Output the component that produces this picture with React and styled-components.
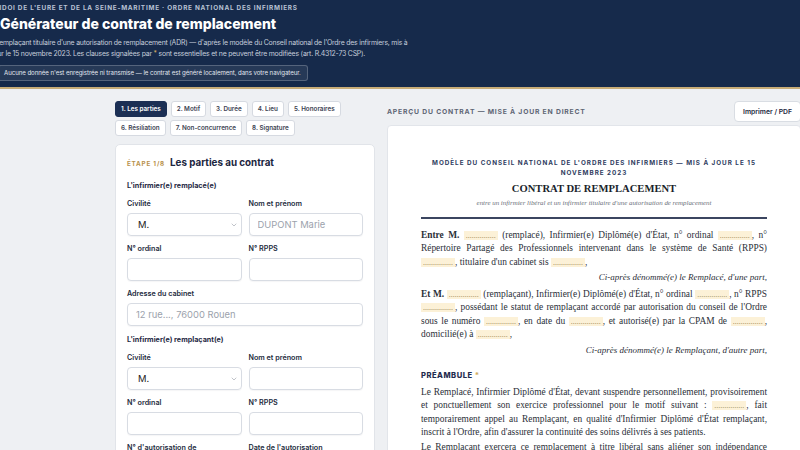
import React from "react";
import styled, { createGlobalStyle } from "styled-components";
import { ChevronDown } from "lucide-react";

const GlobalStyles = createGlobalStyle`
  html, body {
    margin: 0;
    padding: 0;
    background: #eef0f3;
    overflow: hidden;
    font-family: Inter, "Noto Sans", sans-serif;
  }
  * { box-sizing: border-box; }
`;

const Header = styled.header`
  height: 89px;
  padding-top: 3px;
  background: #162a4b;
  border-bottom: 2px solid #c8ad78;
  overflow: hidden;
  color: #fff;
`;

const Eyebrow = styled.div`
  margin-left: ${(p) => p.$shift || 0}px;
  font-size: 6.4px;
  line-height: 10px;
  font-weight: 700;
  letter-spacing: 0.75px;
  color: #b8c2d4;
  white-space: nowrap;
`;

const Title = styled.h1`
  margin: 2px 0 0;
  font-size: 14px;
  line-height: 18px;
  font-weight: 800;
  color: #fff;
  white-space: nowrap;
`;

const Lead = styled.p`
  margin: 5px 0 0 ${(p) => p.$shift || 0}px;
  font-size: 6.9px;
  line-height: 10.5px;
  letter-spacing: -0.2px;
  color: #c6cedb;
  white-space: nowrap;
`;

const Mark = styled.span`
  color: #d2ae64;
`;

const Notice = styled.div`
  display: inline-flex;
  align-items: center;
  height: 16px;
  margin: 4px 0 0 -2px;
  padding: 0 6px 0 5px;
  border: 1px solid rgba(255, 255, 255, 0.22);
  border-radius: 3px;
  background: rgba(255, 255, 255, 0.07);
  font-size: 6.1px;
  letter-spacing: -0.05px;
  color: #e3e8f0;
  white-space: nowrap;
`;

const Main = styled.main`
  display: flex;
  align-items: flex-start;
  gap: 12px;
  padding: 12px 0 0 115px;
`;

const FormColumn = styled.section`
  width: 260px;
  flex-shrink: 0;
`;

const Tabs = styled.nav`
  display: flex;
  flex-wrap: wrap;
  gap: 3px 4px;
  width: 236px;
`;

const Tab = styled.button`
  height: 16px;
  padding: 0 5px;
  border: 1px solid ${(p) => (p.$active ? "#1b2f54" : "#d6dae1")};
  border-radius: 3px;
  background: ${(p) => (p.$active ? "#1b2f54" : "#fff")};
  color: ${(p) => (p.$active ? "#fff" : "#3c4252")};
  font-family: Inter, sans-serif;
  font-size: 6.3px;
  font-weight: 600;
  white-space: nowrap;
`;

const Card = styled.div`
  margin-top: 8px;
  padding: 11px 11px 20px;
  background: #fff;
  border: 1px solid #e1e4e9;
  border-radius: 5px;
`;

const StepRow = styled.div`
  display: flex;
  align-items: baseline;
  gap: 5px;
  line-height: 13px;
`;

const StepTag = styled.span`
  font-size: 6.3px;
  font-weight: 700;
  letter-spacing: 0.8px;
  color: #b8914c;
`;

const StepTitle = styled.span`
  font-size: 9.8px;
  font-weight: 700;
  color: #1b2540;
`;

const Group = styled.div`
  margin-top: ${(p) => p.$top}px;
`;

const GroupTitle = styled.div`
  font-size: 7.2px;
  line-height: 10px;
  font-weight: 700;
  color: #1f2a44;
  margin-bottom: 8px;
`;

const Grid = styled.div`
  display: grid;
  grid-template-columns: 1fr 1fr;
  gap: 8px 7px;
`;

const Field = styled.label`
  display: block;
  grid-column: ${(p) => (p.$wide ? "1 / -1" : "auto")};
`;

const FieldLabel = styled.div`
  font-size: 7.2px;
  line-height: 10px;
  font-weight: 600;
  color: #232b3d;
  margin-bottom: 4px;
  white-space: nowrap;
`;

const Input = styled.input`
  display: block;
  width: 100%;
  height: 23px;
  padding: 0 8px;
  border: 1px solid #d8dce3;
  border-radius: 4px;
  box-shadow: 0 1px 1px rgba(20, 30, 50, 0.04);
  font-family: Inter, sans-serif;
  font-size: 9.4px;
  color: #222;
  &::placeholder { color: #9ca2ac; }
`;

const SelectBox = styled.div`
  position: relative;
  display: flex;
  align-items: center;
  height: 23px;
  padding: 0 10px;
  border: 1px solid #d8dce3;
  border-radius: 4px;
  box-shadow: 0 1px 1px rgba(20, 30, 50, 0.04);
  font-size: 9.4px;
  color: #222;
  svg {
    position: absolute;
    right: 3px;
    top: 7px;
    color: #8a909a;
  }
`;

const PreviewColumn = styled.section`
  width: 414px;
  flex-shrink: 0;
`;

const PreviewBar = styled.div`
  display: flex;
  align-items: center;
  justify-content: space-between;
  height: 21px;
`;

const PreviewLabel = styled.span`
  font-size: 6.8px;
  font-weight: 700;
  letter-spacing: 0.8px;
  color: #5f6675;
`;

const PrintButton = styled.button`
  height: 21px;
  padding: 0 8px;
  border: 1px solid #d9dde3;
  border-radius: 4px;
  background: #fff;
  font-family: Inter, sans-serif;
  font-size: 6.8px;
  font-weight: 600;
  color: #1d2740;
`;

const Sheet = styled.article`
  margin-top: 3px;
  padding: 32px 33px 30px;
  background: #fff;
  border: 1px solid #e2e5ea;
  border-radius: 4px;
  font-family: "Liberation Serif", "Times New Roman", serif;
  color: #2b2f38;
`;

const SheetEyebrow = styled.div`
  text-align: center;
  font-family: Inter, sans-serif;
  font-size: 6.3px;
  line-height: 10px;
  font-weight: 700;
  letter-spacing: 1px;
  color: #2e3b5e;
  padding: 0 8px;
`;

const SheetTitle = styled.h2`
  margin: 4px 0 0;
  text-align: center;
  font-size: 10.6px;
  line-height: 14px;
  font-weight: 700;
  color: #1a1f2b;
`;

const SheetSubtitle = styled.div`
  margin-top: 2px;
  text-align: center;
  font-size: 6.9px;
  line-height: 9px;
  font-style: italic;
  color: #6b707a;
`;

const Rule = styled.hr`
  margin: 10px 0 0;
  border: 0;
  border-top: 2px solid #3b4560;
`;

const Para = styled.p`
  margin: ${(p) => p.$top}px 0 0;
  font-size: 9.4px;
  line-height: 13.4px;
  text-align: justify;
`;

const Signoff = styled.p`
  margin: ${(p) => p.$top}px 0 0;
  font-size: 9px;
  line-height: 13.4px;
  font-style: italic;
  text-align: right;
`;

const SectionHead = styled.h3`
  margin: 13px 0 0;
  font-family: Inter, sans-serif;
  font-size: 7.6px;
  line-height: 12px;
  font-weight: 800;
  letter-spacing: 0.5px;
  color: #1f2c4e;
`;

const Blank = styled.span`
  padding: 0 2px;
  background: #fcf1d7;
  font-size: 8px;
  color: #8f7746;
`;

const Dots = () => <Blank>...............</Blank>;

const tabs = [
  "1. Les parties",
  "2. Motif",
  "3. Durée",
  "4. Lieu",
  "5. Honoraires",
  "6. Résiliation",
  "7. Non-concurrence",
  "8. Signature",
];

const Select = ({ value }) => (
  <SelectBox>
    {value}
    <ChevronDown size={8} strokeWidth={1.6} />
  </SelectBox>
);

const App = () => {
  return (
    <>
      <GlobalStyles />
      <Header>
        <Eyebrow $shift={-6}>
          CIDOI DE L'EURE ET DE LA SEINE-MARITIME · ORDRE NATIONAL DES INFIRMIERS
        </Eyebrow>
        <Title>Générateur de contrat de remplacement</Title>
        <Lead $shift={-5}>
          Remplaçant titulaire d'une autorisation de remplacement (ADR) — d'après le modèle du Conseil national de l'Ordre des infirmiers, mis à
          <br />
          <span style={{ marginLeft: -3 }}>jour le 15 novembre 2023. Les clauses signalées par <Mark>*</Mark> sont essentielles et ne peuvent être modifiées (art. R.4312-73 CSP).</span>
        </Lead>
        <Notice>
          Aucune donnée n'est enregistrée ni transmise — le contrat est généré localement, dans votre navigateur.
        </Notice>
      </Header>

      <Main>
        <FormColumn>
          <Tabs>
            {tabs.map((t, i) => (
              <Tab key={t} $active={i === 0}>
                {t}
              </Tab>
            ))}
          </Tabs>

          <Card>
            <StepRow>
              <StepTag>ÉTAPE 1/8</StepTag>
              <StepTitle>Les parties au contrat</StepTitle>
            </StepRow>

            <Group $top={10}>
              <GroupTitle>L'infirmier(e) remplacé(e)</GroupTitle>
              <Grid>
                <Field>
                  <FieldLabel>Civilité</FieldLabel>
                  <Select value="M." />
                </Field>
                <Field>
                  <FieldLabel>Nom et prénom</FieldLabel>
                  <Input placeholder="DUPONT Marie" />
                </Field>
                <Field>
                  <FieldLabel>N° ordinal</FieldLabel>
                  <Input />
                </Field>
                <Field>
                  <FieldLabel>N° RPPS</FieldLabel>
                  <Input />
                </Field>
                <Field $wide>
                  <FieldLabel>Adresse du cabinet</FieldLabel>
                  <Input placeholder="12 rue..., 76000 Rouen" />
                </Field>
              </Grid>
            </Group>

            <Group $top={9}>
              <GroupTitle>L'infirmier(e) remplaçant(e)</GroupTitle>
              <Grid>
                <Field>
                  <FieldLabel>Civilité</FieldLabel>
                  <Select value="M." />
                </Field>
                <Field>
                  <FieldLabel>Nom et prénom</FieldLabel>
                  <Input />
                </Field>
                <Field>
                  <FieldLabel>N° ordinal</FieldLabel>
                  <Input />
                </Field>
                <Field>
                  <FieldLabel>N° RPPS</FieldLabel>
                  <Input />
                </Field>
                <Field>
                  <FieldLabel>N° d'autorisation de</FieldLabel>
                  <Input />
                </Field>
                <Field>
                  <FieldLabel>Date de l'autorisation</FieldLabel>
                  <Input />
                </Field>
              </Grid>
            </Group>
          </Card>
        </FormColumn>

        <PreviewColumn>
          <PreviewBar>
            <PreviewLabel>APERÇU DU CONTRAT — MISE À JOUR EN DIRECT</PreviewLabel>
            <PrintButton>Imprimer / PDF</PrintButton>
          </PreviewBar>

          <Sheet>
            <SheetEyebrow>
              MODÈLE DU CONSEIL NATIONAL DE L'ORDRE DES INFIRMIERS — MIS À JOUR LE 15 NOVEMBRE 2023
            </SheetEyebrow>
            <SheetTitle>CONTRAT DE REMPLACEMENT</SheetTitle>
            <SheetSubtitle>
              entre un infirmier libéral et un infirmier titulaire d'une autorisation de remplacement
            </SheetSubtitle>
            <Rule />

            <Para $top={10}>
              <b>Entre M.</b> <Dots /> (remplacé), Infirmier(e) Diplômé(e) d'État, n° ordinal <Dots />, n° Répertoire Partagé des Professionnels intervenant dans le système de Santé (RPPS) <Dots />, titulaire d'un cabinet sis <Dots />,
            </Para>
            <Signoff $top={1.6}>Ci-après dénommé(e) le Remplacé, d'une part,</Signoff>

            <Para $top={3.6}>
              <b>Et M.</b> <Dots /> (remplaçant), Infirmier(e) Diplômé(e) d'État, n° ordinal <Dots />, n° RPPS <Dots />, possédant le statut de remplaçant accordé par autorisation du conseil de l'Ordre sous le numéro <Dots />, en date du <Dots />, et autorisé(e) par la CPAM de <Dots />, domicilié(e) à <Dots />,
            </Para>
            <Signoff $top={2.6}>Ci-après dénommé(e) le Remplaçant, d'autre part,</Signoff>

            <SectionHead>
              PRÉAMBULE <Mark>*</Mark>
            </SectionHead>
            <Para $top={3.3}>
              Le Remplacé, Infirmier Diplômé d'État, devant suspendre personnellement, provisoirement et ponctuellement son exercice professionnel pour le motif suivant : <Dots />, fait temporairement appel au Remplaçant, en qualité d'Infirmier Diplômé d'État remplaçant, inscrit à l'Ordre, afin d'assurer la continuité des soins délivrés à ses patients.
            </Para>
            <Para $top={2}>
              Le Remplaçant exercera ce remplacement à titre libéral sans aliéner son indépendance professionnelle et dans le respect des règles déontologiques.
            </Para>
          </Sheet>
        </PreviewColumn>
      </Main>
    </>
  );
};

export default App;
